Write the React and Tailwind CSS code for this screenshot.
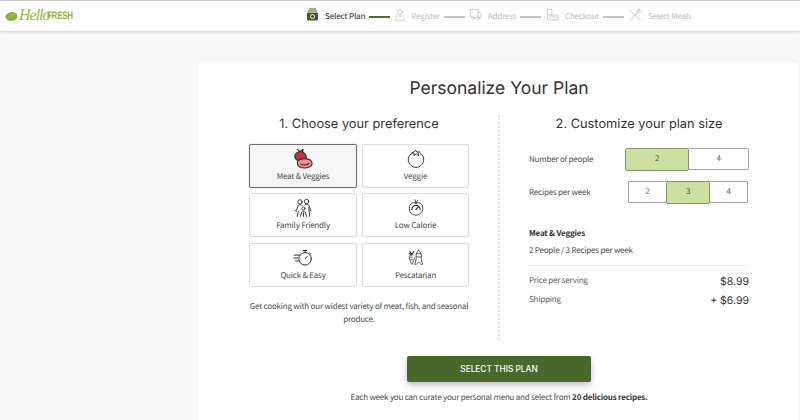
const body = "font-['Noto_Sans_CJK_SC','Noto_Sans',sans-serif] tracking-[-0.2px]";
const head = "font-['Inter','DejaVu_Sans',sans-serif]";
const sz = "text-[8px]";

const S = ({ children, w = 24, h = 24, vb = "0 0 24 24", c = "#333", sw = 1.2, className = "" }) => (
  <svg width={w} height={h} viewBox={vb} fill="none" stroke={c} strokeWidth={sw} strokeLinecap="round" strokeLinejoin="round" className={className}>{children}</svg>
);

const MeatIcon = () => (
  <S w={20} h={21} vb="1 0 22 23">
    <path d="M6 1.500 8 4 12 1.500 11.500 5" fill="#d9c27a" stroke="#3a2a2a" />
    <path d="M3.500 7C5 3.500 11 3 13.500 5.500c2.500 2.500 2.500 5 1.500 7-2.500 2-7.500 2.500-10 .5C3 11.500 2.700 9 3.500 7Z" fill="#c6303f" stroke="#3a2a2a" />
    <path d="M7 13.500c3.500-2.500 10-2.500 13.500 0 2 2 2 5 0 6.500-3.500 2.500-9 2.500-12.500.5-2.500-1.500-3-5-1-7Z" fill="#ef8d97" stroke="#3a2a2a" />
    <path d="M9.500 17.500c3 1.500 6.500 1.200 9-.5" stroke="#3a2a2a" />
  </S>
);
const TomatoIcon = () => (
  <S w={20} h={20}>
    <path d="M7 5.500C3.500 7 2.500 10.500 2.800 13.500 3.300 18.500 7.500 22 12 22s8.700-3.500 9.200-8.500c.3-3-.7-6.500-4.200-8" />
    <path d="M12 6 9.500 8 9.700 5.300 7 4.500l3-1L11.500 1.500 13 3.700l3.500-.2L14.500 5.500l.8 2.500Z" />
  </S>
);
const FamilyIcon = () => (
  <S w={21} h={21} sw={1.100}>
    <circle cx="8" cy="4.500" r="2.500" />
    <circle cx="15.500" cy="4" r="2.500" />
    <circle cx="12" cy="12" r="1.800" />
    <path d="M4 14 6 8.500c1.500-1 3-1 4.500 0M2.500 14.500 4 15M5 21l1-6M13.500 8c1-1.300 3.500-1.300 4.500 0l2.500 7M19 21l-1-10M8.500 21l1.500-5c1.300-1 2.700-1 4 0l1.500 5M12 17v4" />
  </S>
);
const AppleIcon = () => (
  <S w={18} h={20}>
    <path d="M12 5c1-3 2.500-3.500 2.500-3.500M10.500 1 12 5" />
    <path d="M12 5.500C8 3.500 3 6 3 12.500 3 18 7 21.500 12 21.500s9-3.500 9-9C21 6 16 3.500 12 5.500Z" />
    <path d="M6.500 14a5.500 5.500 0 1 1 11 0" strokeWidth="1.600" />
    <path d="M12 14l3-3.500" strokeWidth="1.600" />
  </S>
);
const TimerIcon = () => (
  <S w={20} h={20}>
    <circle cx="14.500" cy="13" r="7.500" />
    <path d="M12.500 3h4M14.500 3v2.500M20 6l1.500 1.500M14.500 13l2.500-3" />
    <path d="M1.500 8.500h7M0.800 12h5M3 15.500h3.500" />
  </S>
);
const FishIcon = () => (
  <S w={17} h={20} sw={1.100}>
    <path d="M8 7.500C4 6.500 2.500 9 3.200 12c.7 3 2.300 7 3.800 9 1.500-2 3-6 3.500-9" />
    <path d="M4 3 6.500 6M9.500 2.500 7.500 6.500M3 5.500 6 7.500" strokeWidth="1.600" stroke="#2d2d2d" />
    <path d="M4.500 11h3M5.500 14.500h2.500" />
    <path d="M16.500 1C13 4 12 8.500 13 13l-2 8c2 .5 3.500-1 5.500-3.500 2 2.500 3.500 4 5.500 3.500l-2-8c1-4.500 0-9-3.500-12Z" />
    <path d="M13.500 6h6M13.200 10c2 1 4.500 1 6.600 0" />
  </S>
);

function Option({ icon, label, active }) {
  return (
    <div className={`h-[44px] flex flex-col items-center justify-end pb-[4px] rounded-[2px] border ${active ? "border-[#6f6f6f] bg-[#f6f6f6] shadow-[0_0_1px_#888]" : "border-[#dcdcdc] bg-white"}`}>
      <div className="h-[22px] flex items-center justify-center">{icon}</div>
      <div className={`${body} ${sz} leading-[13px] whitespace-nowrap text-[#4a4a4a]`}>{label}</div>
    </div>
  );
}

function Step({ icon, label, active, line = true, iw = "w-[14px]" }) {
  return (
    <div className="flex items-center">
      <div className={`${iw} flex justify-center mr-[6px]`}>{icon}</div>
      <span className={`${body} ${sz} leading-[14px] mt-[2px] whitespace-nowrap ${active ? "text-[#4a4a4a] font-medium" : "text-[#bdbdbd]"}`}>{label}</span>
      {line && <div className={`h-[2px] w-[21px] ml-[4px] mr-[5px] mt-[1px] ${active ? "bg-[#4f6b35]" : "bg-[#c4c4c4]"}`} />}
    </div>
  );
}

function Seg({ children, active, className = "" }) {
  return (
    <div className={`flex items-center justify-center ${body} text-[8px] border ${active ? "bg-[#cbe09f] border-[#7f9a66] text-[#4a4a4a] rounded-[2px]" : "bg-white border-[#a3a3a3] text-[#666]"} ${className}`}>{children}</div>
  );
}

export default function App() {
  const g = "#c4c4c4";
  return (
    <div className="h-[420px] w-[800px] overflow-hidden bg-[#f7f7f7] [text-rendering:geometricPrecision]">
      <header className="h-[32px] bg-white border-t-[1px] border-[#c9c9c9] border-b border-b-[#dedede] shadow-[0_1px_2px_rgba(0,0,0,0.08)] flex items-center pl-[5px]">
        <div className="flex items-center w-[300px] text-[#8fb53f]">
          <svg width="13" height="11" viewBox="0 0 15 12" className="mt-[1px] mr-[1px]">
            <ellipse cx="7.500" cy="6" rx="7" ry="5" fill="#8bb03d" transform="rotate(-8 7.500 6)" />
            <path d="M3 8c3-3 6-4 9-4.500" stroke="#b6d067" strokeWidth="0.700" fill="none" />
          </svg>
          <span className="font-['Liberation_Serif',serif] italic text-[16px] leading-[20px] w-[28px] tracking-[-1px] whitespace-nowrap">Hello</span>
          <span className="font-['Liberation_Sans',sans-serif] font-bold text-[11px] leading-[20px] tracking-[-0.300px] w-[27px] whitespace-nowrap scale-x-[0.72] origin-left">FRESH</span>
        </div>
        <Step active label="Select Plan" icon={
          <svg width="13" height="13" viewBox="0 0 13 13" className="mt-[-3px]">
            <path d="M3 1h7M2 3h9" stroke="#3f5c2b" strokeWidth="1" />
            <rect x="1" y="4.500" width="11" height="8" rx="1" fill="#3f5c2b" />
            <circle cx="6.500" cy="8.500" r="2" fill="none" stroke="#fff" strokeWidth="0.900" />
          </svg>
        } />
        <Step iw="w-[10px]" label="Register" icon={
          <S w={12} h={13} c={g} sw={1.500} className="mt-[-3px] shrink-0">
            <circle cx="12" cy="7" r="5" /><path d="M3 23v-3c0-3 3-5 6-5h6c3 0 6 2 6 5v3Z" />
          </S>
        } />
        <Step iw="w-[12px]" label="Address" icon={
          <S w={13} h={13} c={g} sw={1.500} className="mt-[-3px] shrink-0">
            <path d="M3 3h14v14H3ZM17 8h3l2 3v6h-5" /><circle cx="8" cy="19" r="2.500" /><circle cx="17" cy="19" r="2.500" />
          </S>
        } />
        <Step iw="w-[13px]" label="Checkout" icon={
          <S w={13} h={14} c={g} sw={1.500} className="mt-[-3px] shrink-0">
            <path d="M3 2h8v10H3ZM3 12v9h19v-9H8" /><path d="M12 16h7M7 16h2" />
          </S>
        } />
        <Step iw="w-[13px]" line={false} label="Select Meals" icon={
          <S w={14} h={14} c={g} sw={1.500} className="mt-[-3px] shrink-0">
            <path d="M3 3l18 18M21 2 4 21" /><path d="M18 2l4 4-3 2-3-3Z" />
          </S>
        } />
      </header>

      <main className="ml-[198px] mt-[29px] w-[600px] h-[400px] bg-white rounded-[2px] border-t border-[#f2f2f2] pt-[13px] pl-[2px]">
        <h1 className={`${head} text-[17.500px] leading-[27px] text-[#333] text-center`}>Personalize Your Plan</h1>
        <div className="flex pl-[49px] mt-[13px] h-[225px]">
          <section className="w-[220px]">
            <h2 className={`${head} text-[12.800px] leading-[18px] text-[#333] text-center whitespace-nowrap mt-[1px]`}>1. Choose your preference</h2>
            <div className="grid grid-cols-[108px_107px] gap-x-[5px] gap-y-[5.500px] mt-[9.500px]">
              <Option active icon={<MeatIcon />} label="Meat & Veggies" />
              <Option icon={<TomatoIcon />} label="Veggie" />
              <Option icon={<FamilyIcon />} label="Family Friendly" />
              <Option icon={<AppleIcon />} label="Low Calorie" />
              <Option icon={<TimerIcon />} label="Quick & Easy" />
              <Option icon={<FishIcon />} label="Pescatarian" />
            </div>
            <p className={`${body} ${sz} leading-[13px] text-[#4a4a4a] text-center mt-[13px]`}>Get cooking with our widest variety of meat, fish, and seasonal produce.</p>
          </section>
          <div className="ml-[29px] w-[31px] border-l-2 border-dotted border-[#e4e4e4]" />
          <section className="w-[220px]">
            <h2 className={`${head} text-[12.800px] leading-[18px] text-[#333] text-center whitespace-nowrap mt-[1px]`}>2. Customize your plan size</h2>
            <div className="flex items-center h-[24px] mt-[13px]">
              <span className={`${body} ${sz} text-[#4a4a4a] w-[96px] mt-[1px]`}>Number of people</span>
              <div className="flex items-center">
                <Seg active className="w-[64px] h-[23px]">2</Seg>
                <Seg className="w-[60px] h-[22px] border-l-0 rounded-r-[2px]">4</Seg>
              </div>
            </div>
            <div className="flex items-center h-[24px] mt-[9px]">
              <span className={`${body} ${sz} text-[#4a4a4a] w-[99px] mt-[2px]`}>Recipes per week</span>
              <div className="flex items-center">
                <Seg className="w-[38px] h-[22px] border-r-0 rounded-l-[2px]">2</Seg>
                <Seg active className="w-[44px] h-[23px]">3</Seg>
                <Seg className="w-[38px] h-[22px] border-l-0 rounded-r-[2px]">4</Seg>
              </div>
            </div>
            <div className={`${body} ${sz} leading-[14px] font-semibold text-[#333] mt-[23px]`}>Meat &amp; Veggies</div>
            <div className={`${body} ${sz} leading-[14px] text-[#4a4a4a] mt-[3px]`}>2 People / 3 Recipes per week</div>
            <div className="h-px bg-[#ececec] mt-[7px]" />
            <div className="flex justify-between items-center h-[16px] mt-[7px]">
              <span className={`${body} ${sz} text-[#5a5a5a]`}>Price per serving</span>
              <span className={`${head} text-[10.500px] text-[#333] mt-[1px]`}>$8.99</span>
            </div>
            <div className="flex justify-between items-center h-[16px] mt-[3px]">
              <span className={`${body} ${sz} text-[#5a5a5a] mt-[-1px]`}>Shipping</span>
              <span className={`${head} text-[10.500px] text-[#333] mt-[1px]`}>+ $6.99</span>
            </div>
          </section>
        </div>
        <div className="flex justify-center mt-[16px]">
          <button className={`${head} w-[184px] h-[26px] bg-[#47692c] rounded-[2px] text-white text-[8.300px] font-medium shadow-[0_3px_6px_rgba(0,0,0,0.25)]`}>SELECT THIS PLAN</button>
        </div>
        <p className={`${body} ${sz} leading-[14px] text-[#4a4a4a] text-center mt-[9px]`}>
          Each week you can curate your personal menu and select from <b className="font-bold text-[#333]">20 delicious recipes.</b>
        </p>
      </main>
    </div>
  );
}
